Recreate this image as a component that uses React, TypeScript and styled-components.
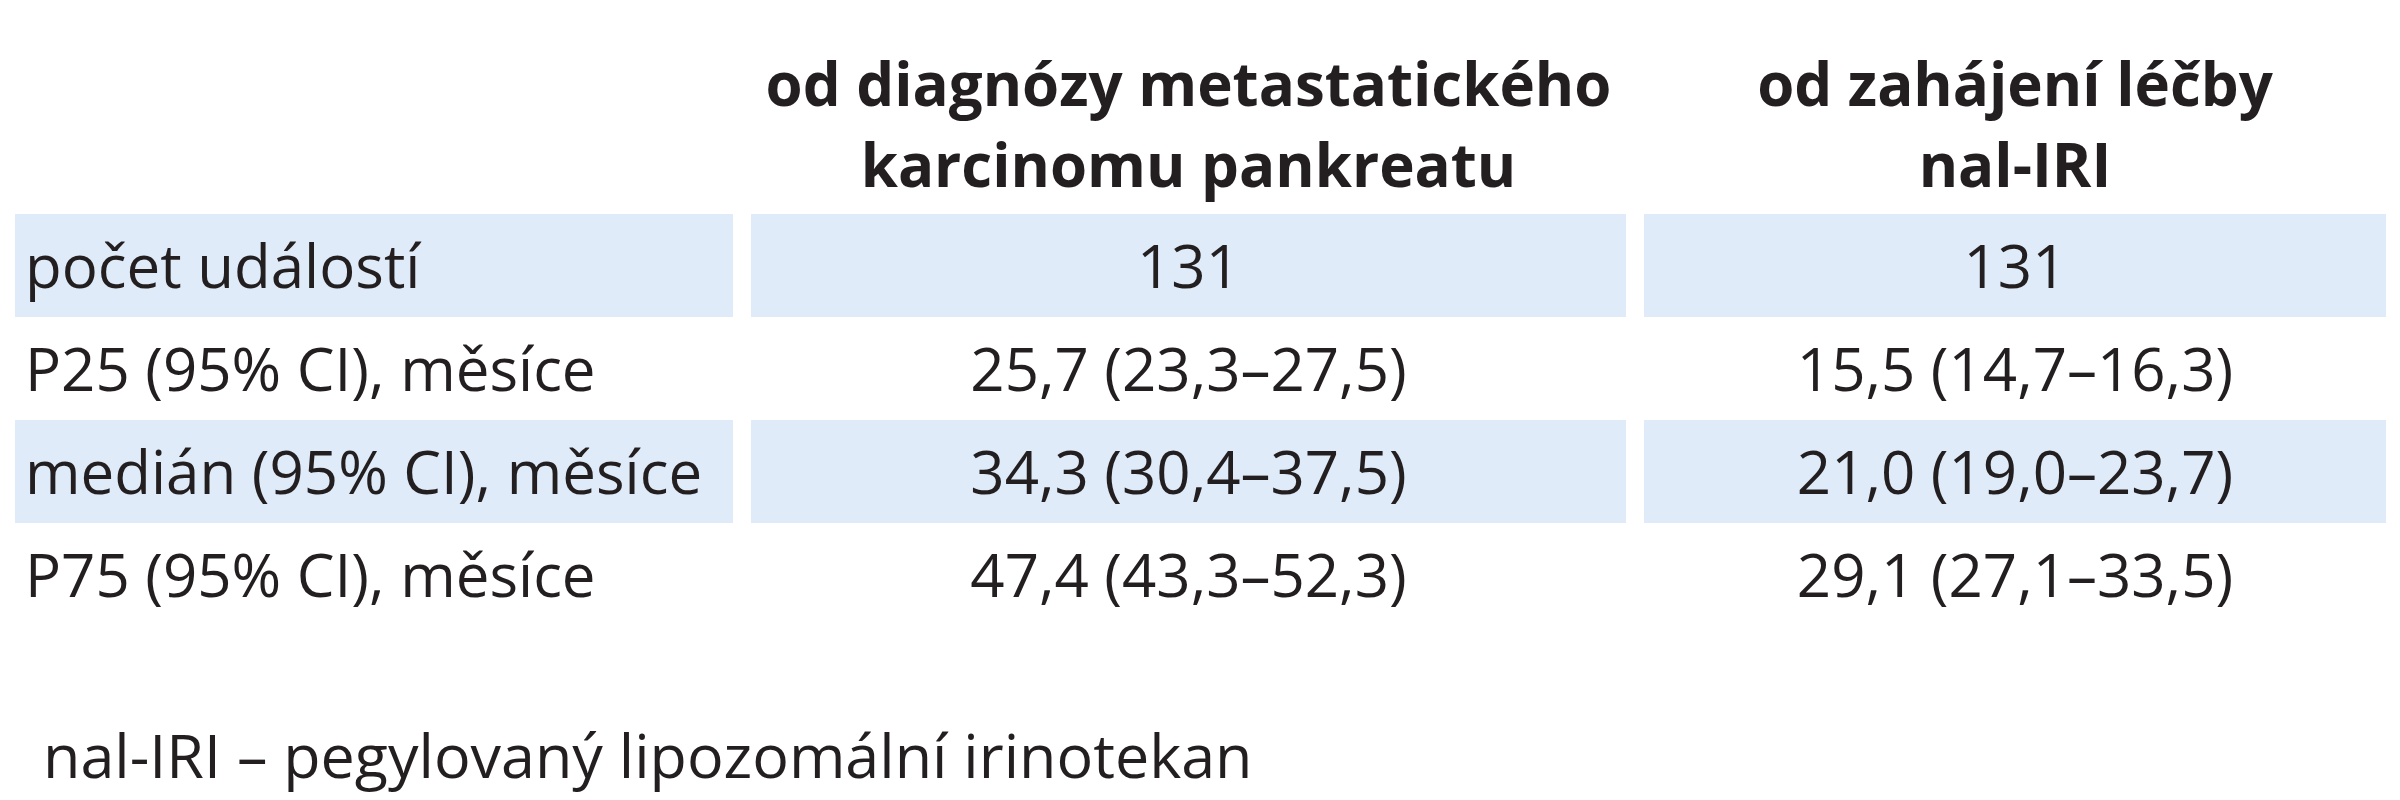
import React from "react";
import styled, { createGlobalStyle } from "styled-components";

const GlobalStyle = createGlobalStyle`
  html, body {
    margin: 0;
    padding: 0;
    background: #ffffff;
  }
  body {
    width: 2400px;
    height: 800px;
    overflow: hidden;
    font-family: "Open Sans", "Noto Sans", "Liberation Sans", sans-serif;
    color: #231f20;
  }
`;

const Page = styled.div`
  width: 2400px;
  height: 800px;
  display: flex;
  flex-direction: column;
`;

const Grid = styled.div`
  display: grid;
  grid-template-columns: 718px 875px 742px;
  column-gap: 18px;
  padding-left: 15px;
`;

const HeadCell = styled.div`
  font-size: 60px;
  font-weight: 700;
  line-height: 81px;
  text-align: center;
  padding-top: 43px;
  padding-bottom: 9px;
  white-space: nowrap;
  height: 214px;
  box-sizing: border-box;
`;

const BodyCell = styled.div<{ $shaded: boolean; $align: "left" | "center" }>`
  font-size: 60px;
  font-weight: 400;
  line-height: 103px;
  height: 103px;
  background: ${(p) => (p.$shaded ? "#dfebf8" : "transparent")};
  text-align: ${(p) => p.$align};
  padding-left: ${(p) => (p.$align === "left" ? "10px" : "0")};
  white-space: nowrap;
`;

const Note = styled.div`
  font-size: 61px;
  line-height: 81px;
  margin-top: 88px;
  padding-left: 43px;
  white-space: nowrap;
`;

const rows = [
  ["počet událostí", "131", "131"],
  ["P25 (95% CI), měsíce", "25,7 (23,3–27,5)", "15,5 (14,7–16,3)"],
  ["medián (95% CI), měsíce", "34,3 (30,4–37,5)", "21,0 (19,0–23,7)"],
  ["P75 (95% CI), měsíce", "47,4 (43,3–52,3)", "29,1 (27,1–33,5)"],
];

export default function App() {
  return (
    <>
      <GlobalStyle />
      <Page>
        <Grid>
          <HeadCell />
          <HeadCell>
            od diagnózy metastatického
            <br />
            karcinomu pankreatu
          </HeadCell>
          <HeadCell>
            od zahájení léčby
            <br />
            nal-IRI
          </HeadCell>
          {rows.map((r, i) => (
            <React.Fragment key={i}>
              <BodyCell $shaded={i % 2 === 0} $align="left">
                {r[0]}
              </BodyCell>
              <BodyCell $shaded={i % 2 === 0} $align="center">
                {r[1]}
              </BodyCell>
              <BodyCell $shaded={i % 2 === 0} $align="center">
                {r[2]}
              </BodyCell>
            </React.Fragment>
          ))}
        </Grid>
        <Note>nal-IRI – pegylovaný lipozomální irinotekan</Note>
      </Page>
    </>
  );
}
